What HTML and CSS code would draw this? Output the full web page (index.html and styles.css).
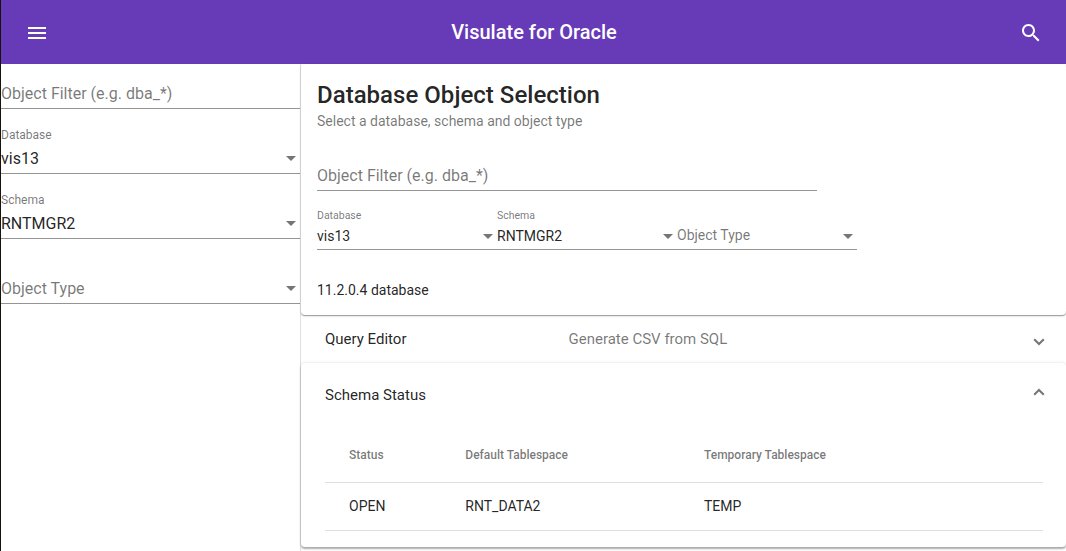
FILE: index.html
```html
<!DOCTYPE html>
<html lang="en">
<head>
<meta charset="utf-8">
<title>Visulate for Oracle</title>
<link rel="stylesheet" href="styles.css">
</head>
<body>
<div class="app">
  <header class="toolbar">
    <svg class="icon" viewBox="0 0 24 24"><path d="M3 18h18v-2H3v2zm0-5h18v-2H3v2zm0-7v2h18V6H3z"/></svg>
    <h1 class="brand">Visulate for Oracle</h1>
    <svg class="icon" viewBox="0 0 24 24"><path d="M15.5 14h-.79l-.28-.27C15.41 12.59 16 11.11 16 9.5 16 5.91 13.09 3 9.5 3S3 5.91 3 9.5 5.91 16 9.5 16c1.61 0 3.09-.59 4.23-1.57l.27.28v.79l5 4.99L20.49 19l-4.99-5zm-6 0C7.01 14 5 11.99 5 9.5S7.01 5 9.5 5 14 7.01 14 9.5 11.99 14 9.5 14z"/></svg>
  </header>
  <div class="body">
    <aside class="sidebar">
      <div class="field first"><div class="value hint">Object Filter (e.g. dba_*)</div></div>
      <div class="field"><div class="label">Database</div><div class="value">vis13<i class="arrow"></i></div></div>
      <div class="field"><div class="label">Schema</div><div class="value">RNTMGR2<i class="arrow"></i></div></div>
      <div class="field"><div class="value hint">Object Type<i class="arrow"></i></div></div>
    </aside>
    <main class="main">
      <section class="card">
        <h2 class="title">Database Object Selection</h2>
        <p class="subtitle">Select a database, schema and object type</p>
        <div class="field filter"><div class="value hint">Object Filter (e.g. dba_*)</div></div>
        <div class="selects">
          <div class="field small"><div class="label">Database</div><div class="value">vis13<i class="arrow"></i></div></div>
          <div class="field small"><div class="label">Schema</div><div class="value">RNTMGR2<i class="arrow"></i></div></div>
          <div class="field small empty"><div class="value hint">Object Type<i class="arrow"></i></div></div>
        </div>
        <p class="version">11.2.0.4 database</p>
      </section>
      <section class="panel closed">
        <div class="panel-head">
          <span class="panel-title">Query Editor</span>
          <span class="panel-desc">Generate CSV from SQL</span>
          <svg class="chevron" viewBox="0 0 12 8"><path d="M1.2 1.2 6 6l4.800-4.800"/></svg>
        </div>
      </section>
      <section class="panel open">
        <div class="panel-head">
          <span class="panel-title">Schema Status</span>
          <svg class="chevron" viewBox="0 0 12 8"><path d="M1.200 6.800 6 2l4.800 4.800"/></svg>
        </div>
        <div class="table">
          <div class="row head"><span>Status</span><span>Default Tablespace</span><span>Temporary Tablespace</span></div>
          <div class="row data"><span>OPEN</span><span>RNT_DATA2</span><span>TEMP</span></div>
        </div>
      </section>
    </main>
  </div>
</div>
</body>
</html>
```
FILE: styles.css
```css
* { box-sizing: border-box; }
body { margin: 0; font-family: Roboto, sans-serif; color: rgba(0,0,0,.87); background: #fff; }
h1, h2, p { margin: 0; }
.app { height: 551px; display: flex; flex-direction: column; border-left: 1px solid #16130c; overflow: hidden; }
.toolbar { height: 64px; flex: none; display: flex; align-items: center; justify-content: space-between; padding: 1px 23px 0 24px; background: #673ab7; color: #fff; }
.icon { width: 24px; height: 24px; fill: currentColor; }
.brand { font-size: 20px; font-weight: 500; line-height: 32px; padding-bottom: 1px; }
.body { flex: 1; display: flex; min-height: 0; }
.sidebar { width: 300px; flex: none; border-right: 1px solid #e0e0e0; }
.field { height: 65px; display: flex; flex-direction: column; justify-content: flex-end; gap: 6px; padding-bottom: 4px; border-bottom: 1px solid #949494; }
.field.first { height: 45px; }
.label { font-size: 12px; line-height: 16px; color: rgba(0,0,0,.54); }
.value { display: flex; align-items: center; justify-content: space-between; font-size: 16px; line-height: 20px; }
.hint { color: rgba(0,0,0,.54); }
.arrow { width: 0; height: 0; margin: 0 4px 2px 0; border: 5px solid transparent; border-top-color: #757575; border-bottom: 0; }
.main { flex: 1; display: flex; flex-direction: column; min-width: 0; }
.card { height: 251px; flex: none; padding: 16px; border-radius: 4px; background: #fff; box-shadow: 0 1px 1px rgba(0,0,0,.34), 0 1px 3px rgba(0,0,0,.12); position: relative; z-index: 1; }
.title { font-size: 24px; font-weight: 500; line-height: 30px; letter-spacing: .02px; }
.subtitle { font-size: 14px; line-height: 20px; padding-top: 1px; color: rgba(0,0,0,.54); }
.filter { width: 500px; height: 60px; }
.selects { display: flex; width: 540px; }
.small { flex: 1; height: 59px; gap: 3px; padding-bottom: 3px; }
.small .label { font-size: 10.5px; line-height: 14px; }
.small .value { font-size: 14px; }
.small .arrow { margin-bottom: 0; }
.small.empty { padding-bottom: 4px; }
.small.empty .arrow { margin-bottom: -2px; }
.version { font-size: 14px; line-height: 20px; margin-top: 30px; }
.panel { background: #fff; border-radius: 4px; padding: 0 24px; }
.closed { height: 48px; flex: none; }
.open { height: 184px; flex: none; box-shadow: 0 2px 2px rgba(0,0,0,.3), 0 0 3px rgba(0,0,0,.15); }
.panel-head { display: grid; grid-template-columns: 243.5px 1fr 12px; align-items: center; height: 48px; font-size: 15px; }
.open .panel-head { height: 64px; }
.panel-desc { color: rgba(0,0,0,.54); }
.chevron { grid-column: 3; width: 12px; height: 8px; fill: none; stroke: #757575; stroke-width: 2; margin-left: 3px; margin-top: 6px; }
.open .chevron { margin-top: -7px; }
.table { margin-right: -1px; font-size: 14px; }
.row { display: grid; grid-template-columns: 116.3px 238.7px 1fr; align-items: center; height: 48px; padding-left: 24px; border-bottom: 1px solid #e0e0e0; }
.row.head { height: 56px; font-size: 12px; font-weight: 500; color: rgba(0,0,0,.54); }
.row.data { padding-bottom: 2px; }
```
